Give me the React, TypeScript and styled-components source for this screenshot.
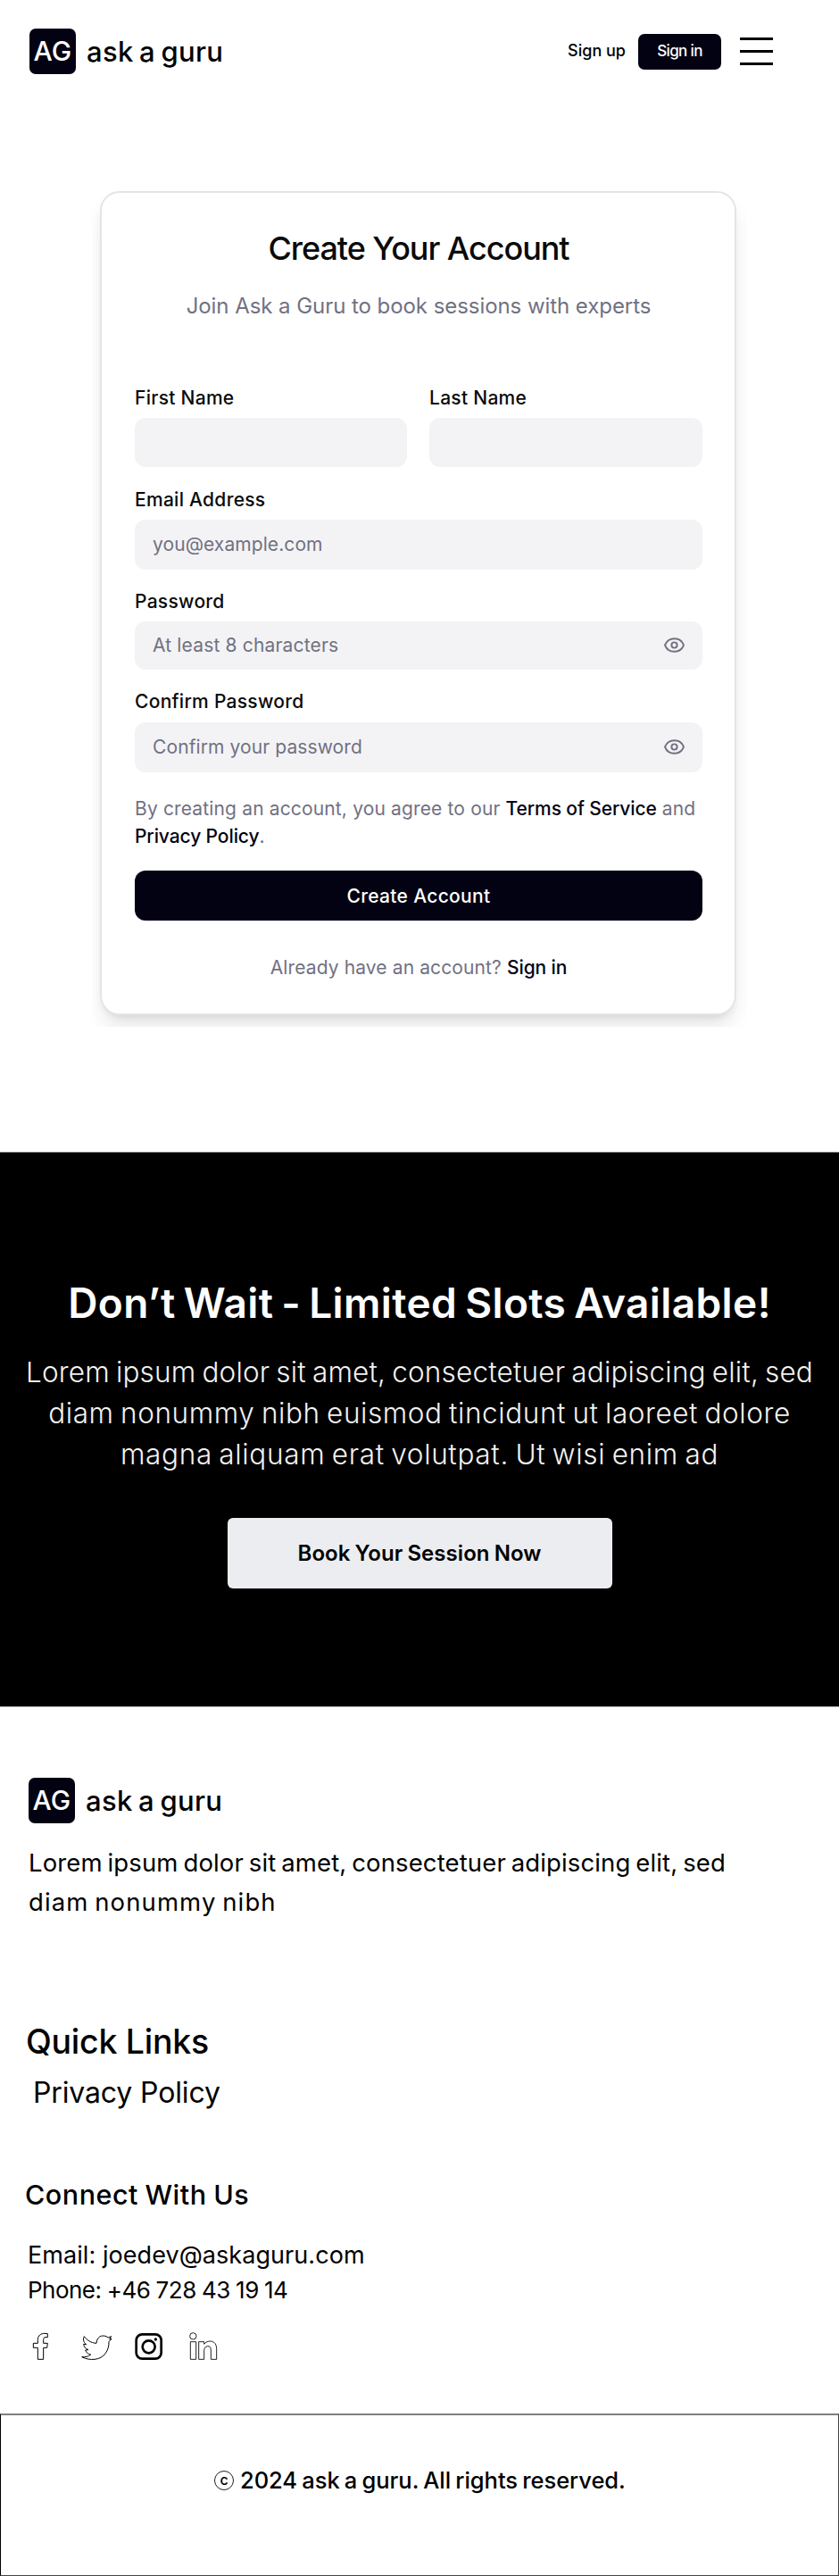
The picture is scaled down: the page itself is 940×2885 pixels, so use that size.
import React from 'react';
import styled, { createGlobalStyle } from 'styled-components';
import { Eye } from 'lucide-react';

const ink = '#030213';
const muted = '#717182';

const GlobalStyle = createGlobalStyle`
  *, *::before, *::after { box-sizing: border-box; }
  body {
    margin: 0;
    background: #fff;
    color: #000;
    font-family: Inter, "Liberation Sans", sans-serif;
  }
  h1, h2, h3, p { margin: 0; }
  a { color: inherit; text-decoration: none; }
`;

const Page = styled.div`
  width: 940px;
  height: 2885px;
  display: flex;
  flex-direction: column;
  overflow: hidden;
`;

/* Header */

const Header = styled.header`
  display: flex;
  align-items: center;
  height: 51px;
  margin-top: 32px;
  padding: 0 74px 0 33px;
`;

const Brand = styled.div`
  display: flex;
  align-items: center;
`;

const BrandMark = styled.span`
  display: flex;
  align-items: center;
  justify-content: center;
  width: 52px;
  height: 51px;
  padding-bottom: 1px;
  border-radius: 7px;
  background: ${ink};
  color: #fff;
  font-size: 30px;
  font-weight: 500;
  letter-spacing: 0.3px;
`;

const BrandName = styled.span`
  margin-left: 12px;
  padding-top: 1px;
  font-size: 31px;
  line-height: 40px;
  font-weight: 500;
  letter-spacing: 0.3px;
  word-spacing: -2px;
`;

const HeaderActions = styled.nav`
  display: flex;
  align-items: center;
  margin-left: auto;
`;

const SignUp = styled.a`
  padding-bottom: 1px;
  font-size: 18px;
  line-height: 24px;
  font-weight: 500;
`;

const SignIn = styled.button`
  width: 93px;
  height: 40px;
  margin: 0 21px 0 14px;
  padding: 0 0 2px;
  border: 0;
  border-radius: 7px;
  background: ${ink};
  color: #fff;
  font: 500 17px Inter, sans-serif;
  letter-spacing: -0.62px;
`;

const MenuButton = styled.button`
  display: flex;
  flex-direction: column;
  justify-content: space-between;
  width: 37px;
  height: 31px;
  padding: 0;
  border: 0;
  background: none;
`;

const MenuBar = styled.span`
  height: 3px;
  background: #000;
`;

/* Sign-up card */

const CardStage = styled.main`
  width: 734px;
  height: 967px;
  margin: 100px 0 0 103px;
  padding: 31px 12px 0 9px;
  overflow: hidden;
`;

const Card = styled.form`
  display: flex;
  flex-direction: column;
  height: 923px;
  padding: 40px 36px 0 37px;
  border: 2px solid #e5e5e5;
  border-radius: 22px;
  background: #fff;
  box-shadow: 0 15px 23px -4px rgba(0, 0, 0, 0.11), 0 6px 9px -5px rgba(0, 0, 0, 0.1);
`;

const CardTitle = styled.h1`
  font-size: 36px;
  line-height: 44px;
  font-weight: 500;
  letter-spacing: -1.06px;
  text-align: center;
  color: #0a0a0a;
`;

const CardSubtitle = styled.p`
  margin: 26px 0 50px;
  font-size: 24px;
  line-height: 34px;
  letter-spacing: -0.06px;
  text-align: center;
  color: ${muted};
`;

const NameRow = styled.div`
  display: grid;
  grid-template-columns: 305px 306px;
  column-gap: 25px;
`;

const Field = styled.label<{ $top?: number; $gap?: number }>`
  display: flex;
  flex-direction: column;
  gap: ${(p) => p.$gap ?? 8}px;
  margin-top: ${(p) => p.$top ?? 22}px;
`;

const FieldLabel = styled.span`
  font-size: 21px;
  line-height: 28px;
  font-weight: 500;
  letter-spacing: 0.28px;
  color: #0a0a0a;
`;

const InputBox = styled.span<{ $height: number }>`
  display: flex;
  align-items: center;
  justify-content: space-between;
  height: ${(p) => p.$height}px;
  padding: 0 19px 1px 20px;
  border-radius: 12px;
  background: #f3f3f5;
  color: ${muted};
`;

const Input = styled.input<{ $track?: number }>`
  flex: 1;
  min-width: 0;
  padding: 0;
  border: 0;
  outline: 0;
  background: transparent;
  font: 400 21px Inter, sans-serif;
  letter-spacing: ${(p) => p.$track ?? 0.1}px;
  color: ${muted};
  &::placeholder { color: ${muted}; opacity: 1; }
`;

const Terms = styled.p`
  height: 61px;
  margin-top: 26px;
  font-size: 21px;
  line-height: 30.8px;
  letter-spacing: 0.15px;
  white-space: nowrap;
  color: ${muted};
`;

const InlineLink = styled.a`
  color: ${ink};
  font-weight: 500;
  letter-spacing: -0.1px;
`;

const Submit = styled.button`
  height: 56px;
  margin-top: 23px;
  padding: 0;
  border: 0;
  border-radius: 12px;
  background: ${ink};
  color: #fff;
  font: 500 21px Inter, sans-serif;
  letter-spacing: 0.32px;
`;

const SignInHint = styled.p`
  margin-top: 38px;
  font-size: 21px;
  line-height: 30px;
  letter-spacing: 0.12px;
  text-align: center;
  color: ${muted};
`;

/* Call to action */

const Cta = styled.section`
  display: flex;
  flex-direction: column;
  align-items: center;
  height: 622px;
  margin-top: 140px;
  padding-top: 140px;
  border-top: 1px solid #737373;
  border-bottom: 1px solid #b5b5b5;
  background: #000;
  background-clip: padding-box;
  color: #fff;
`;

const CtaTitle = styled.h2`
  font-size: 46px;
  line-height: 56px;
  font-weight: 600;
  letter-spacing: 0.4px;
  word-spacing: -3px;
  white-space: nowrap;
`;

const CtaText = styled.p`
  margin-top: 27px;
  font-size: 31.5px;
  line-height: 46px;
  font-weight: 300;
  word-spacing: -2px;
  text-align: center;
  white-space: nowrap;
  color: #f2f2f2;
`;

const Line = styled.span<{ $track: number }>`
  display: block;
  letter-spacing: ${(p) => p.$track}px;
`;

const CtaButton = styled.button`
  width: 431px;
  height: 79px;
  margin-top: 48px;
  padding: 0;
  border: 0;
  border-radius: 6px;
  background: #ecedf1;
  color: #000;
  font: 600 24px Inter, sans-serif;
  letter-spacing: 0.05px;
  word-spacing: -1px;
`;

/* Footer */

const Footer = styled.footer`
  display: flex;
  flex-direction: column;
  padding: 79px 0 0 32px;
`;

const About = styled.p`
  margin-top: 22px;
  font-size: 27.5px;
  line-height: 44px;
  word-spacing: -2px;
  white-space: nowrap;
`;

const QuickLinksTitle = styled.h2`
  margin: 110px 0 0 -3px;
  font-size: 37.5px;
  line-height: 50px;
  font-weight: 500;
  letter-spacing: -0.26px;
`;

const QuickLink = styled.a`
  margin: 12px 0 0 5px;
  font-size: 32px;
  line-height: 40px;
  letter-spacing: -0.14px;
`;

const ConnectTitle = styled.h3`
  margin: 74px 0 0 -4px;
  font-size: 30.5px;
  line-height: 40px;
  font-weight: 500;
  letter-spacing: 0.5px;
  word-spacing: -1px;
`;

const Contact = styled.address`
  margin: 28px 0 0 -1px;
  font-size: 27px;
  line-height: 39px;
  font-style: normal;
  white-space: nowrap;
`;

const PhoneLine = styled(Line)`
  font-size: 26px;
  word-spacing: -0.5px;
`;

const Socials = styled.div`
  display: flex;
  height: 32px;
  margin: 28px 0 0 4px;
`;

const SocialIcon = styled.svg<{ $gap?: number }>`
  flex: none;
  height: 32px;
  margin-left: ${(p) => p.$gap ?? 0}px;
  fill: none;
  stroke: #000;
  stroke-linejoin: round;
`;

const Legal = styled.div`
  display: flex;
  align-items: flex-start;
  height: 182px;
  margin-top: 59px;
  padding: 55px 0 0 239px;
  border: 1px solid #444;
  border-top: 2px solid #808080;
  border-left-color: #000;
`;

const CopyrightMark = styled.span`
  display: flex;
  align-items: center;
  justify-content: center;
  width: 22px;
  height: 22px;
  margin: 7px 7px 0 0;
  padding-bottom: 2px;
  border: 1px solid #222;
  border-radius: 50%;
  font-size: 16px;
  line-height: 20px;
  font-weight: 500;
`;

const LegalText = styled.p`
  font-size: 25.5px;
  line-height: 36px;
  font-weight: 500;
  letter-spacing: -0.05px;
  word-spacing: -1.5px;
`;

function Logo() {
  return (
    <Brand>
      <BrandMark>AG</BrandMark>
      <BrandName>ask a guru</BrandName>
    </Brand>
  );
}

function EyeToggle() {
  return <Eye size={25} strokeWidth={1.9} color={muted} />;
}

export default function App() {
  return (
    <Page>
      <GlobalStyle />
      <Header>
        <Logo />
        <HeaderActions>
          <SignUp href="#">Sign up</SignUp>
          <SignIn type="button">Sign in</SignIn>
          <MenuButton type="button" aria-label="Menu">
            <MenuBar />
            <MenuBar />
            <MenuBar />
          </MenuButton>
        </HeaderActions>
      </Header>

      <CardStage>
        <Card>
          <CardTitle>Create Your Account</CardTitle>
          <CardSubtitle>Join Ask a Guru to book sessions with experts</CardSubtitle>
          <NameRow>
            <Field>
              <FieldLabel>First Name</FieldLabel>
              <InputBox $height={55}><Input type="text" /></InputBox>
            </Field>
            <Field>
              <FieldLabel>Last Name</FieldLabel>
              <InputBox $height={55}><Input type="text" /></InputBox>
            </Field>
          </NameRow>
          <Field $top={23}>
            <FieldLabel>Email Address</FieldLabel>
            <InputBox $height={56}><Input type="email" placeholder="you@example.com" $track={0.08} /></InputBox>
          </Field>
          <Field>
            <FieldLabel>Password</FieldLabel>
            <InputBox $height={54}>
              <Input type="password" placeholder="At least 8 characters" $track={0.17} />
              <EyeToggle />
            </InputBox>
          </Field>
          <Field $gap={9}>
            <FieldLabel>Confirm Password</FieldLabel>
            <InputBox $height={56}>
              <Input type="password" placeholder="Confirm your password" />
              <EyeToggle />
            </InputBox>
          </Field>
          <Terms>
            By creating an account, you agree to our <InlineLink href="#">Terms of Service</InlineLink> and
            <br />
            <InlineLink href="#">Privacy Policy</InlineLink>.
          </Terms>
          <Submit type="button">Create Account</Submit>
          <SignInHint>
            Already have an account? <InlineLink href="#">Sign in</InlineLink>
          </SignInHint>
        </Card>
      </CardStage>

      <Cta>
        <CtaTitle>Don’t Wait - Limited Slots Available!</CtaTitle>
        <CtaText>
          <Line $track={0.18}>Lorem ipsum dolor sit amet, consectetuer adipiscing elit, sed</Line>
          <Line $track={0.58}>diam nonummy nibh euismod tincidunt ut laoreet dolore</Line>
          <Line $track={0.66}>magna aliquam erat volutpat. Ut wisi enim ad</Line>
        </CtaText>
        <CtaButton type="button">Book Your Session Now</CtaButton>
      </Cta>

      <Footer>
        <Logo />
        <About>
          <Line $track={0.13}>Lorem ipsum dolor sit amet, consectetuer adipiscing elit, sed</Line>
          <Line $track={1.1}>diam nonummy nibh</Line>
        </About>
        <QuickLinksTitle>Quick Links</QuickLinksTitle>
        <QuickLink href="#">Privacy Policy</QuickLink>
        <ConnectTitle>Connect With Us</ConnectTitle>
        <Contact>
          <Line $track={0.06}>Email: joedev@askaguru.com</Line>
          <PhoneLine $track={-0.52}>Phone: +46 728 43 19 14</PhoneLine>
        </Contact>
        <Socials>
          <SocialIcon width="18" viewBox="108 66 54 96" strokeWidth="3" aria-label="Facebook">
            <path d="M127 157V118H112V103H127V92C127 76 138 70 150 70L160 71V83H153C147 83 146 86 146 92V103H160L158 118H146V157Z" />
          </SocialIcon>
          <SocialIcon width="37" viewBox="270 66 111 96" strokeWidth="3" $gap={36} aria-label="Twitter">
            <path d="M283 80C279 88 279 99 290 107L281 106C282 115 287 121 297 125L287 126C290 134 296 140 305 141C298 148 286 150 275 149C290 157 305 158 318 157C350 154 367 127 366 98L375 88L368 90L374 80L364 84C352 74 326 74 324 103C305 102 292 92 283 80Z" />
          </SocialIcon>
          <SocialIcon width="33" viewBox="450 66 99 96" $gap={23} aria-label="Instagram">
            <rect x="458" y="73" width="84" height="82" rx="20" strokeWidth="8" />
            <circle cx="500" cy="115" r="21" strokeWidth="8" />
            <circle cx="523" cy="90" r="5" fill="#000" stroke="none" />
          </SocialIcon>
          <SocialIcon width="33" viewBox="633 66 99 96" strokeWidth="2.6" $gap={28} aria-label="LinkedIn">
            <circle cx="649" cy="79" r="11" />
            <path d="M640 98H659V157H640Z" />
            <path d="M668 157V98H686V106C690 100 698 96 707 96C722 97 728 108 728 122V157H709V126C709 116 704 112 698 113C690 114 686 119 686 128V157Z" />
          </SocialIcon>
        </Socials>
      </Footer>

      <Legal>
        <CopyrightMark>c</CopyrightMark>
        <LegalText>2024 ask a guru. All rights reserved.</LegalText>
      </Legal>
    </Page>
  );
}
